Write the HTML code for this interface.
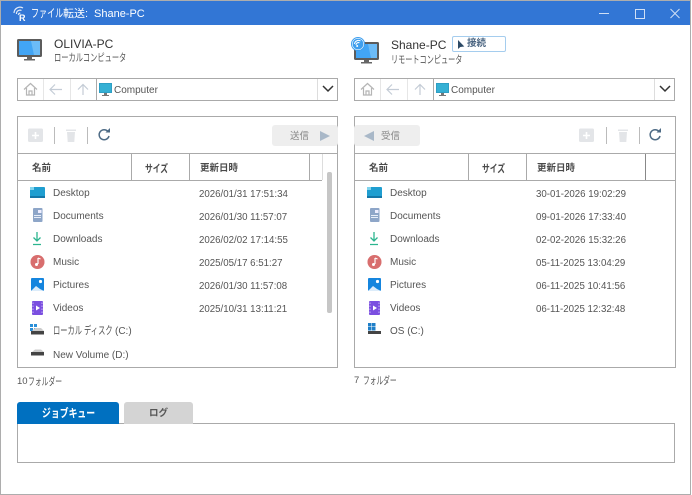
<!DOCTYPE html>
<html><head><meta charset="utf-8"><style>
html,body{margin:0;padding:0;background:#fff}
#w{position:relative;width:692px;height:495px;overflow:hidden;background:#fff;font-family:"Liberation Sans","Noto Sans CJK JP",sans-serif;color:#555;font-size:10px;filter:blur(.35px)}
#w div,#w span,#w svg{position:absolute;white-space:nowrap}
.box{border:1px solid #aaa;box-sizing:border-box;background:#fff}
.b{background:#aaa}
.t{line-height:14px;height:14px}
.d{font-size:9.7px}
.h{font-weight:bold;color:#4a4a4a;font-size:9.5px}
.s{transform-origin:0 50%}
</style></head><body><div id="w">

<div style="left:0;top:0;width:691px;height:495px;border:1px solid #adadad;box-sizing:border-box"></div>
<div style="left:1px;top:1px;width:689px;height:24px;background:#3276d5"></div>
<svg style="left:12px;top:4px" width="20" height="17" viewBox="0 0 20 17" fill="none" stroke="#dfe9f8" stroke-width="1.200"><path d="M2 9a6 6 0 0 1 9-5M4.500 10a3.500 3.500 0 0 1 5-3.500M6.500 11a1.300 1.300 0 0 1 1.800-1.600"/></svg>
<div class="t" style="left:19px;top:12px;color:#fff;font-size:9px;font-weight:bold;line-height:12px;height:12px">R</div>
<div class="t s" style="left:31px;top:7px;color:#fff;font-size:11.500px;transform:scaleX(.7)">ファイル</div>
<div class="t" style="left:63px;top:7px;color:#fff;font-size:11px">転送:</div>
<div class="t" style="left:94px;top:7px;color:#fff;font-size:11px">Shane-PC</div>
<svg style="left:596px;top:4px" width="90" height="18" viewBox="0 0 90 18" fill="none" stroke="#cfdff5" stroke-width="1"><path d="M3 9.500h10M39.500 5.500h9v9h-9zM74.500 5l9 9M83.500 5l-9 9"/></svg>

<!-- left host -->
<svg style="left:17px;top:38px" width="26" height="24" viewBox="0 0 26 24"><rect x="0" y="1" width="25" height="18" rx="1.500" fill="#5c5c5c"/><rect x="2" y="3" width="21" height="14" fill="#42a5f5"/><path d="M14 3h9v14h-6z" fill="#6cbcf8"/><rect x="10" y="19" width="5" height="2" fill="#666"/><rect x="7" y="21" width="11" height="1.500" fill="#666"/></svg>
<div class="t" style="left:54px;top:37px;color:#333;font-size:12px;line-height:15px;height:15px">OLIVIA-PC</div>
<div class="t s" style="left:54px;top:51px;font-size:10.500px;transform:scaleX(.69)">ローカルコンピュータ</div>

<!-- right host -->
<svg style="left:354px;top:42px" width="26" height="22" viewBox="0 0 26 22"><rect x="0" y="0" width="25" height="18" rx="1.500" fill="#5c5c5c"/><rect x="2" y="2" width="21" height="14" fill="#42a5f5"/><path d="M14 2h9v14h-6z" fill="#6cbcf8"/><rect x="10" y="18" width="5" height="2" fill="#666"/><rect x="7" y="20" width="11" height="1.500" fill="#666"/></svg>
<svg style="left:351px;top:37px" width="14" height="14" viewBox="0 0 14 14"><circle cx="7" cy="7" r="6.500" fill="#fff" stroke="#3f9fee"/><circle cx="7" cy="7" r="5.400" fill="#3f9fee"/><path d="M3.500 7a4 4 0 0 1 6-3M5 8a2.400 2.400 0 0 1 3.400-2.200" stroke="#fff" fill="none" stroke-width="1"/><circle cx="6.200" cy="9" r="1" fill="#fff"/></svg>
<div class="t" style="left:391px;top:38px;color:#333;font-size:12px;line-height:15px;height:15px">Shane-PC</div>
<div class="t s" style="left:391px;top:53px;font-size:10.500px;transform:scaleX(.68)">リモートコンピュータ</div>
<div style="left:452px;top:36px;width:54px;height:16px;box-sizing:border-box;border:1px solid #a5cdee;border-radius:2px;background:#fff"></div>
<svg style="left:456px;top:39px" width="10" height="11" viewBox="0 0 10 11"><path d="M2 1v9l2.300-2 4-.5z" fill="#2c4a66"/></svg>
<div class="t" style="left:467px;top:37px;font-size:9.500px;font-weight:bold;color:#4a6480">接続</div>

<!-- path bars -->
<div class="box" style="left:17px;top:78px;width:321px;height:23px"></div>
<div style="left:43px;top:79px;width:1px;height:21px;background:#e6e6e6"></div>
<div style="left:70px;top:79px;width:1px;height:21px;background:#e6e6e6"></div>
<div class="b" style="left:96px;top:79px;width:1px;height:21px"></div>
<div style="left:317px;top:79px;width:1px;height:21px;background:#ddd"></div>
<svg style="left:23px;top:82px" width="70" height="15" viewBox="0 0 70 15" fill="none" stroke="#b5b5b5" stroke-width="1.200"><path d="M1 7.500L7.500 1.500 14 7.500M3.500 6v7h8V6M6 13V9h3v4"/><path d="M27 7.500h12M32 2.500l-5 5 5 5" stroke="#c4ccd6"/><path d="M60 13V2.500M55 7.500l5-5 5 5" stroke="#c4ccd6"/></svg>
<svg style="left:99px;top:83px" width="14" height="14" viewBox="0 0 14 14"><rect x="0" y="0" width="13" height="10" fill="#2e9fc4"/><rect x="1" y="1" width="11" height="8" fill="#35b0d4"/><rect x="5" y="10" width="3" height="2" fill="#777"/><rect x="3" y="12" width="7" height="1" fill="#777"/></svg>
<div class="t" style="left:114px;top:84px;font-size:10px">Computer</div>
<svg style="left:321px;top:84px" width="14" height="10" viewBox="0 0 14 10" fill="none" stroke="#333" stroke-width="1.500"><path d="M2 2l5 5 5-5"/></svg>

<div class="box" style="left:354px;top:78px;width:321px;height:23px"></div>
<div style="left:380px;top:79px;width:1px;height:21px;background:#e6e6e6"></div>
<div style="left:407px;top:79px;width:1px;height:21px;background:#e6e6e6"></div>
<div class="b" style="left:433px;top:79px;width:1px;height:21px"></div>
<div style="left:654px;top:79px;width:1px;height:21px;background:#ddd"></div>
<svg style="left:360px;top:82px" width="70" height="15" viewBox="0 0 70 15" fill="none" stroke="#b5b5b5" stroke-width="1.200"><path d="M1 7.500L7.500 1.500 14 7.500M3.500 6v7h8V6M6 13V9h3v4"/><path d="M27 7.500h12M32 2.500l-5 5 5 5" stroke="#c4ccd6"/><path d="M60 13V2.500M55 7.500l5-5 5 5" stroke="#c4ccd6"/></svg>
<svg style="left:436px;top:83px" width="14" height="14" viewBox="0 0 14 14"><rect x="0" y="0" width="13" height="10" fill="#2e9fc4"/><rect x="1" y="1" width="11" height="8" fill="#35b0d4"/><rect x="5" y="10" width="3" height="2" fill="#777"/><rect x="3" y="12" width="7" height="1" fill="#777"/></svg>
<div class="t" style="left:451px;top:84px;font-size:10px">Computer</div>
<svg style="left:658px;top:84px" width="14" height="10" viewBox="0 0 14 10" fill="none" stroke="#333" stroke-width="1.500"><path d="M2 2l5 5 5-5"/></svg>

<!-- left panel -->
<div class="box" style="left:17px;top:116px;width:321px;height:252px"></div>
<svg style="left:27px;top:126px" width="90" height="19" viewBox="0 0 90 19"><rect x="1" y="2.500" width="15" height="13.500" rx="1.500" fill="#e3e5e8"/><path d="M8.500 6v7M5 9.500h7" stroke="#fff" stroke-width="1.600"/><rect x="27" y="1" width="1" height="17" fill="#bbb"/><path d="M40 6h8l-.7 10h-6.600zM39 3.500h10V5H39z" fill="#e3e5e8"/><rect x="60" y="1" width="1" height="17" fill="#bbb"/><path d="M81 5.500A5 5 0 1 0 82 10" fill="none" stroke="#4d6b85" stroke-width="1.500"/><path d="M78.500 6.500h4.500V2z" fill="#4d6b85"/></svg>
<div style="left:272px;top:125px;width:66px;height:21px;background:#eee;border-radius:3px"></div>
<div class="t" style="left:290px;top:129px;font-size:9.500px;color:#888;line-height:15px">送信</div>
<svg style="left:319px;top:130px" width="12" height="12" viewBox="0 0 12 12"><path d="M1 1l10 5L1 11z" fill="#a9b8c8"/></svg>

<div style="left:18px;top:153px;width:320px;height:1px;background:#aaa"></div>
<div style="left:18px;top:180px;width:304px;height:1px;background:#aaa"></div>
<div class="b" style="left:131px;top:154px;width:1px;height:26px"></div>
<div class="b" style="left:189px;top:154px;width:1px;height:26px"></div>
<div class="b" style="left:309px;top:154px;width:1px;height:26px"></div>
<div style="left:322px;top:154px;width:1px;height:26px;background:#ddd"></div>
<div style="left:327px;top:172px;width:5px;height:141px;background:#c6c6c6;border-radius:2px"></div>
<div class="t h" style="left:32px;top:162px">名前</div>
<div class="t h s" style="left:145px;top:162px;font-size:10.500px;transform:scaleX(.74)">サイズ</div>
<div class="t h" style="left:200px;top:162px">更新日時</div>

<svg style="left:30px;top:185px" width="16" height="172" viewBox="0 0 16 172">
<rect x="0" y="2" width="15" height="11" rx="1" fill="#1f9ed0"/><rect x="0" y="2" width="4" height="3" fill="#7fd4ee"/><rect x="0" y="11" width="15" height="2" fill="#1477a8"/>
<rect x="3" y="23" width="9.500" height="14" rx="1" fill="#8ea6c8"/><rect x="8" y="25" width="3.500" height="3" fill="#eef"/><rect x="4" y="30" width="7" height="1" fill="#e8eef8"/><rect x="4" y="32" width="7" height="1" fill="#e8eef8"/>
<path d="M7 47v9M3.500 52.500l3.500 3.500 3.500-3.500M3 59.500h8" fill="none" stroke="#2cb58f" stroke-width="1.300"/>
<circle cx="7.500" cy="77" r="7" fill="#de6f5e"/><circle cx="7.500" cy="77" r="7" fill="#c76aa0" opacity=".25"/><path d="M8 73v6" stroke="#fff" stroke-width="1.200"/><circle cx="6.500" cy="79.500" r="1.500" fill="#fff"/><path d="M8 73l2.500 1" stroke="#fff" stroke-width="1.200"/>
<rect x="1" y="93" width="13" height="13" rx="1" fill="#1585de"/><circle cx="10.500" cy="96.500" r="1.600" fill="#fff"/><path d="M1 106l5-5 4 3 4 2z" fill="#dcecfa"/>
<rect x="2" y="116" width="11" height="14" rx="1" fill="#7b4fe0"/><path d="M6 120.500l4 2.500-4 2.500z" fill="#fff"/><path d="M3 117.500v11M12 117.500v11" stroke="#c9b6f5" stroke-dasharray="1.500 1.500"/>
<rect x="0" y="139" width="3" height="3" fill="#2a8fd8"/><rect x="4" y="139" width="3" height="3" fill="#2a8fd8"/><rect x="0" y="143" width="3" height="3" fill="#2a8fd8"/><rect x="4" y="143" width="3" height="3" fill="#2a8fd8"/><path d="M2 146l3-3h6l3 3z" fill="#ccc"/><rect x="1" y="146" width="13" height="3.500" fill="#444"/>
<path d="M2 167l3-2.500h6l3 2.500z" fill="#ccc"/><rect x="1" y="167" width="13" height="3.500" fill="#444"/>
</svg>
<div class="t" style="left:53px;top:187px">Desktop</div><div class="t d" style="left:199px;top:188px">2026/01/31 17:51:34</div>
<div class="t" style="left:53px;top:210px">Documents</div><div class="t d" style="left:199px;top:211px">2026/01/30 11:57:07</div>
<div class="t" style="left:53px;top:233px">Downloads</div><div class="t d" style="left:199px;top:234px">2026/02/02 17:14:55</div>
<div class="t" style="left:53px;top:256px">Music</div><div class="t d" style="left:199px;top:257px">2025/05/17 6:51:27</div>
<div class="t" style="left:53px;top:279px">Pictures</div><div class="t d" style="left:199px;top:280px">2026/01/30 11:57:08</div>
<div class="t" style="left:53px;top:302px">Videos</div><div class="t d" style="left:199px;top:303px">2025/10/31 13:11:21</div>
<div class="t s" style="left:53px;top:324px;font-size:11px;transform:scaleX(.66)">ローカル ディスク</div><div class="t" style="left:115px;top:325px">(C:)</div>
<div class="t" style="left:53px;top:349px">New Volume (D:)</div>
<div class="t" style="left:17px;top:375px;font-size:9.500px">10</div><div class="t s" style="left:28px;top:375px;font-size:10.500px;transform:scaleX(.65)">フォルダー</div>

<!-- right panel -->
<div class="box" style="left:354px;top:116px;width:322px;height:252px"></div>
<div style="left:354px;top:125px;width:66px;height:21px;background:#eee;border-radius:3px"></div>
<svg style="left:363px;top:130px" width="12" height="12" viewBox="0 0 12 12"><path d="M11 1L1 6l10 5z" fill="#a9b8c8"/></svg>
<div class="t" style="left:381px;top:129px;font-size:9.500px;color:#888;line-height:15px">受信</div>
<svg style="left:578px;top:126px" width="90" height="19" viewBox="0 0 90 19"><rect x="1" y="2.500" width="15" height="13.500" rx="1.500" fill="#e3e5e8"/><path d="M8.500 6v7M5 9.500h7" stroke="#fff" stroke-width="1.600"/><rect x="28" y="1" width="1" height="17" fill="#bbb"/><path d="M41 6h8l-.7 10h-6.600zM40 3.500h10V5H40z" fill="#e3e5e8"/><rect x="61" y="1" width="1" height="17" fill="#bbb"/><path d="M81 5.500A5 5 0 1 0 82 10" fill="none" stroke="#4d6b85" stroke-width="1.500"/><path d="M78.500 6.500h4.500V2z" fill="#4d6b85"/></svg>

<div style="left:355px;top:153px;width:320px;height:1px;background:#aaa"></div>
<div style="left:355px;top:180px;width:320px;height:1px;background:#aaa"></div>
<div class="b" style="left:468px;top:154px;width:1px;height:26px"></div>
<div class="b" style="left:526px;top:154px;width:1px;height:26px"></div>
<div class="b" style="left:645px;top:154px;width:1px;height:26px;background:#888"></div>
<div class="t h" style="left:369px;top:162px">名前</div>
<div class="t h s" style="left:482px;top:162px;font-size:10.500px;transform:scaleX(.74)">サイズ</div>
<div class="t h" style="left:537px;top:162px">更新日時</div>

<svg style="left:367px;top:185px" width="16" height="172" viewBox="0 0 16 172">
<rect x="0" y="2" width="15" height="11" rx="1" fill="#1f9ed0"/><rect x="0" y="2" width="4" height="3" fill="#7fd4ee"/><rect x="0" y="11" width="15" height="2" fill="#1477a8"/>
<rect x="3" y="23" width="9.500" height="14" rx="1" fill="#8ea6c8"/><rect x="8" y="25" width="3.500" height="3" fill="#eef"/><rect x="4" y="30" width="7" height="1" fill="#e8eef8"/><rect x="4" y="32" width="7" height="1" fill="#e8eef8"/>
<path d="M7 47v9M3.500 52.500l3.500 3.500 3.500-3.500M3 59.500h8" fill="none" stroke="#2cb58f" stroke-width="1.300"/>
<circle cx="7.500" cy="77" r="7" fill="#de6f5e"/><circle cx="7.500" cy="77" r="7" fill="#c76aa0" opacity=".25"/><path d="M8 73v6" stroke="#fff" stroke-width="1.200"/><circle cx="6.500" cy="79.500" r="1.500" fill="#fff"/><path d="M8 73l2.500 1" stroke="#fff" stroke-width="1.200"/>
<rect x="1" y="93" width="13" height="13" rx="1" fill="#1585de"/><circle cx="10.500" cy="96.500" r="1.600" fill="#fff"/><path d="M1 106l5-5 4 3 4 2z" fill="#dcecfa"/>
<rect x="2" y="116" width="11" height="14" rx="1" fill="#7b4fe0"/><path d="M6 120.500l4 2.500-4 2.500z" fill="#fff"/><path d="M3 117.500v11M12 117.500v11" stroke="#c9b6f5" stroke-dasharray="1.500 1.500"/>
<rect x="1" y="138" width="3.500" height="3.500" fill="#1f7fc8"/><rect x="5" y="138" width="3.500" height="3.500" fill="#1f7fc8"/><rect x="1" y="142" width="3.500" height="3.500" fill="#1f7fc8"/><rect x="5" y="142" width="3.500" height="3.500" fill="#1f7fc8"/><rect x="1" y="146" width="13" height="3" fill="#444"/>
</svg>
<div class="t" style="left:390px;top:187px">Desktop</div><div class="t d" style="left:536px;top:188px">30-01-2026 19:02:29</div>
<div class="t" style="left:390px;top:210px">Documents</div><div class="t d" style="left:536px;top:211px">09-01-2026 17:33:40</div>
<div class="t" style="left:390px;top:233px">Downloads</div><div class="t d" style="left:536px;top:234px">02-02-2026 15:32:26</div>
<div class="t" style="left:390px;top:256px">Music</div><div class="t d" style="left:536px;top:257px">05-11-2025 13:04:29</div>
<div class="t" style="left:390px;top:279px">Pictures</div><div class="t d" style="left:536px;top:280px">06-11-2025 10:41:56</div>
<div class="t" style="left:390px;top:302px">Videos</div><div class="t d" style="left:536px;top:303px">06-11-2025 12:32:48</div>
<div class="t" style="left:390px;top:325px">OS (C:)</div>
<div class="t" style="left:354px;top:374px;font-size:9.500px">7</div><div class="t s" style="left:363px;top:374px;font-size:10.500px;transform:scaleX(.64)">フォルダー</div>

<!-- tabs -->
<div class="box" style="left:17px;top:423px;width:658px;height:40px"></div>
<div style="left:17px;top:402px;width:102px;height:22px;background:#0070c0;border-radius:3px 3px 0 0"></div>
<div class="t s" style="left:42px;top:407px;color:#fff;font-size:11.500px;font-weight:bold;transform:scaleX(.77)">ジョブキュー</div>
<div style="left:124px;top:402px;width:69px;height:22px;background:#d4d4d4;border-radius:3px 3px 0 0"></div>
<div class="t" style="left:149px;top:407px;color:#555;font-size:9.500px;font-weight:bold">ログ</div>

</div></body></html>
